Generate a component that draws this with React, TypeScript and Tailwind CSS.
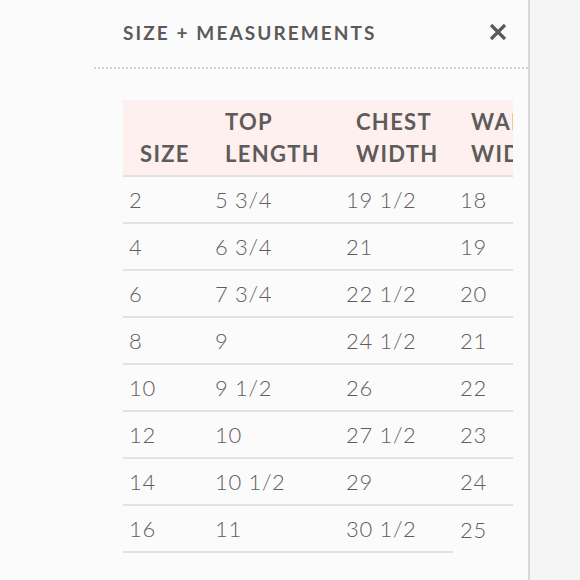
import React from "react";

const rows: [string, string, string, string][] = [
  ["2", "5 3/4", "19 1/2", "18"],
  ["4", "6 3/4", "21", "19"],
  ["6", "7 3/4", "22 1/2", "20"],
  ["8", "9", "24 1/2", "21"],
  ["10", "9 1/2", "26", "22"],
  ["12", "10", "27 1/2", "23"],
  ["14", "10 1/2", "29", "24"],
  ["16", "11", "30 1/2", "25"],
];

export default function App() {
  return (
    <div className="flex w-[580px] h-[580px] bg-[#f7f6f6] overflow-hidden" style={{ fontFamily: "Lato, 'Open Sans', sans-serif" }}>
      <div className="w-[530px] h-full shrink-0 bg-[#fcfbfb] border-r-2 border-[#d9d8d8] flex flex-col">
        <div className="flex items-center justify-between pl-[123px] pr-[20px] pt-[19px] h-[46px]">
          <div className="text-[19px] font-bold tracking-[0.11em] text-[#5b5a5a] leading-none">SIZE + MEASUREMENTS</div>
          <svg width="20" height="20" viewBox="0 0 20 20" className="mt-[-1px]">
            <path d="M3 3 L17 17 M17 3 L3 17" stroke="#5b5a5a" strokeWidth="3.2" strokeLinecap="butt" />
          </svg>
        </div>
        <div className="ml-[94px] mt-[21px] border-t-2 border-dotted border-[#d3d3d3]" />
        <div className="ml-[123px] mt-[31px] w-[390px] overflow-hidden">
          <div className="w-[500px]">
            <div className="flex bg-[#fdf0ef] border-b-2 border-[#e2e0e0] text-[22px] font-bold tracking-[0.06em] leading-[32px] text-[#5e5b5b] pt-[6px] pb-[5px]">
              <div className="w-[85px] pl-[17px] flex items-end">SIZE</div>
              <div className="w-[131px] pl-[17px]">TOP<br />LENGTH</div>
              <div className="w-[114px] pl-[17px]">CHEST<br />WIDTH</div>
              <div className="w-[170px] pl-[18px]">WAIST<br />WIDTH</div>
            </div>
            {rows.map((r, i) => {
              const last = i === rows.length - 1;
              const b = last ? "border-b-2 border-[#e3e2e2]" : "";
              return (
                <div key={i} className={`flex h-[47px] text-[22px] font-light tracking-[0.03em] text-[#5f5d5d] ${last ? "" : "border-b-2 border-[#e3e2e2]"}`}>
                  <div className={`w-[85px] pl-[6px] pb-[1px] flex items-center ${b}`}>{r[0]}</div>
                  <div className={`w-[131px] pl-[7px] pb-[1px] flex items-center ${b}`}>{r[1]}</div>
                  <div className={`w-[114px] pl-[7px] pb-[1px] flex items-center ${b}`}>{r[2]}</div>
                  <div className="w-[170px] pl-[7px] pb-[1px] flex items-center">{r[3]}</div>
                </div>
              );
            })}
          </div>
        </div>
      </div>
      <div className="flex-1 bg-[#f6f5f5]" />
    </div>
  );
}
